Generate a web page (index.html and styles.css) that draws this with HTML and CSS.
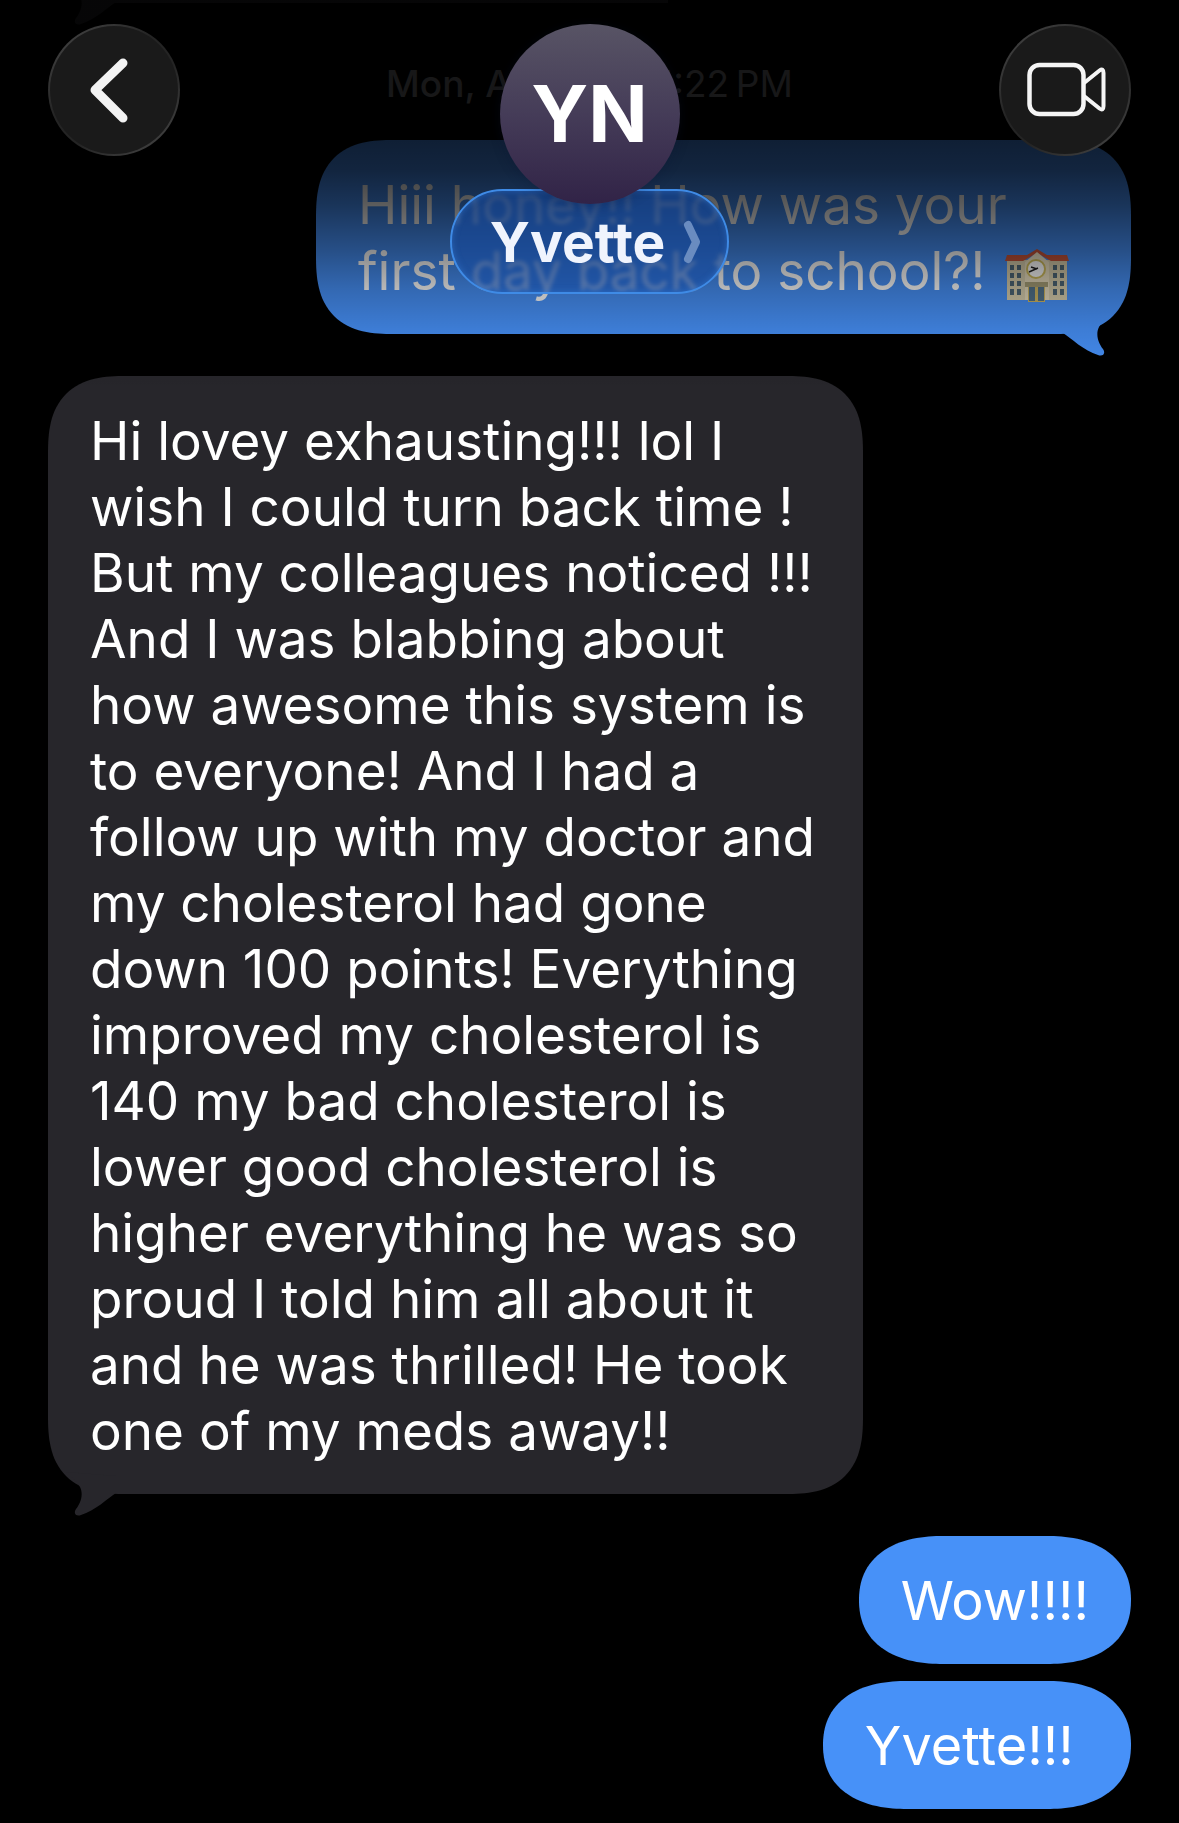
FILE: index.html
```html
<!DOCTYPE html>
<html lang="en">
<head>
<meta charset="utf-8">
<meta name="viewport" content="width=device-width, initial-scale=1">
<title>Yvette</title>
<link rel="stylesheet" href="styles.css">
</head>
<body>
<header class="topbar">
  <button class="round-button" type="button" aria-label="Back">
    <svg viewBox="0 0 132 132" aria-hidden="true"><path d="M75 39 47 66 75 94" fill="none" stroke="#f3f3f3" stroke-width="9" stroke-linecap="round" stroke-linejoin="round"/></svg>
  </button>
  <div class="contact">
    <div class="avatar">YN</div>
    <button class="name-pill" type="button">
      <span>Yvette</span>
      <svg class="chevron" viewBox="0 0 18 44" aria-hidden="true"><path d="M5 5 13 22 5 39" fill="none" stroke="#6a8cc0" stroke-width="8" stroke-linecap="round" stroke-linejoin="round"/></svg>
    </button>
  </div>
  <button class="round-button" type="button" aria-label="Video call">
    <svg viewBox="0 0 132 132" aria-hidden="true"><g fill="none" stroke="#f5f5f5" stroke-width="4" stroke-linejoin="round"><rect x="30.500" y="41" width="54" height="49" rx="10" stroke-width="4.500"/><path d="M85 59 100.500 46.500Q104.500 43.500 104.500 49V82Q104.500 87.500 100.500 84.500L85 72"/></g></svg>
  </button>
</header>

<main class="thread">
  <div class="bubble received earlier">
    <svg class="tail" viewBox="0 0 58 50" aria-hidden="true"><path d="M56 6C50 12 45 15 42 21C38 29 42 38 46 43C49 47 46 51 41 49C27 45 14 32 6 27V10Z"/></svg>
  </div>
  <p class="timestamp"><b>Mon, Aug 11</b> at 5:22&#8239;PM</p>
  <div class="bubble sent wide">
    Hiii honey!! How was your first day back to school?!
    <svg class="school" viewBox="0 0 64 53" role="img" aria-label="School">
      <path d="M2 11h60v40H2z" fill="#d9cfae"/>
      <path d="M0 12 2 6H22L32 0 42 6H62L64 12H46L32 4 18 12Z" fill="#c8553a"/>
      <path d="M20 13 32 3 44 13V51H20Z" fill="#eadfc0"/>
      <circle cx="31" cy="20" r="9" fill="#fff" stroke="#d1bd5e" stroke-width="2"/>
      <path d="M33 19 24 23M32 20 26 18" stroke="#222" stroke-width="1.500"/>
      <g fill="#4f6878">
        <path d="M5 16h4v5H5zM12 16h4v5h-4zM5 24h4v5H5zM12 24h4v5h-4zM5 32h4v5H5zM12 32h4v5h-4zM5 40h4v6H5zM12 40h4v6h-4z"/>
        <path d="M48 16h4v5h-4zM55 16h4v5h-4zM48 24h4v5h-4zM55 24h4v5h-4zM48 32h4v5h-4zM55 32h4v5h-4zM48 40h4v6h-4zM55 40h4v6h-4z"/>
      </g>
      <path d="M20 33h23v5H20z" fill="#a8a078"/>
      <path d="M23 38h17v15H23z" fill="#d1b862"/>
      <path d="M24 38h6v14h-6zM33 38h6v14h-6z" fill="#53748c"/>
    </svg>
    <svg class="tail" viewBox="0 0 58 50" aria-hidden="true"><path d="M56 6C50 12 45 15 42 21C38 29 42 38 46 43C49 47 46 51 41 49C27 45 14 32 6 27V10Z"/></svg>
  </div>
  <div class="bubble received wide">
    Hi lovey exhausting!!! lol I wish I could turn back time !<br>
    But my colleagues noticed !!! And I was blabbing about<br>
    how awesome this system is to everyone! And I had a<br>
    follow up with my doctor and my cholesterol had gone down 100 points! Everything improved my cholesterol is<br>
    140 my bad cholesterol is lower good cholesterol is<br>
    higher everything he was so proud I told him all about it and he was thrilled! He took one of my meds away!!
    <svg class="tail" viewBox="0 0 58 50" aria-hidden="true"><path d="M56 6C50 12 45 15 42 21C38 29 42 38 46 43C49 47 46 51 41 49C27 45 14 32 6 27V10Z"/></svg>
  </div>
  <div class="bubble sent pill">Wow!!!!</div>
  <div class="bubble sent pill follow">Yvette!!!&nbsp;</div>
</main>
</body>
</html>
```

FILE: styles.css
```css
* {
  box-sizing: border-box;
}

body {
  margin: 0;
  background: #000;
  color: #fff;
  font-family: Inter, "Liberation Sans", sans-serif;
  font-size: 53px;
  line-height: 66px;
}

button {
  margin: 0;
  padding: 0;
  color: inherit;
  font: inherit;
  cursor: pointer;
}

.topbar {
  position: absolute;
  inset: 0 0 auto 0;
  z-index: 1;
  display: flex;
  justify-content: space-between;
  align-items: flex-start;
  height: 400px;
  padding: 24px 48px;
  background: linear-gradient(
    rgba(0, 0, 0, 0.84) 0,
    rgba(0, 0, 0, 0.84) 90px,
    rgba(0, 0, 0, 0.79) 140px,
    rgba(0, 0, 0, 0.75) 170px,
    rgba(0, 0, 0, 0.64) 205px,
    rgba(0, 0, 0, 0.46) 250px,
    rgba(0, 0, 0, 0.28) 290px,
    rgba(0, 0, 0, 0.14) 330px,
    rgba(0, 0, 0, 0) 390px
  );
}

.round-button {
  width: 132px;
  height: 132px;
  border: 2px solid transparent;
  border-radius: 50%;
  background:
    linear-gradient(#1a1a1a, #1a1a1a) padding-box,
    linear-gradient(140deg, #4a4a4a, #242424 40%, #242424 60%, #4a4a4a) border-box;
}

.round-button svg {
  display: block;
  width: 132px;
  height: 132px;
  margin: -2px;
}

.contact {
  display: flex;
  flex-direction: column;
  align-items: center;
}

.avatar {
  z-index: 1;
  width: 180px;
  height: 180px;
  border-radius: 50%;
  background: linear-gradient(#585465, #453c58 50%, #312347);
  box-shadow: 0 2px 12px rgba(10, 20, 50, 0.3);
  font-size: 78px;
  font-weight: 700;
  line-height: 180px;
  text-align: center;
}

.name-pill {
  display: flex;
  align-items: center;
  gap: 18px;
  height: 105px;
  margin-top: -15px;
  padding: 0 26px 0 38px;
  border: 2px solid #3f8be6;
  border-radius: 53px;
  background: rgba(22, 74, 158, 0.6);
  box-shadow: inset 0 0 6px rgba(58, 128, 218, 0.5);
  backdrop-filter: blur(2px);
  color: #f0f4fd;
  font-size: 55px;
  font-weight: 700;
}

.chevron {
  width: 18px;
  height: 44px;
}

.thread {
  display: flex;
  flex-direction: column;
  align-items: flex-start;
  padding: 0 48px 14px;
}

.bubble {
  position: relative;
  margin-top: 42px;
  padding: 32px 42px 30px;
  border-radius: 60px;
}

.pill {
  border-radius: 64px;
  font-size: 54px;
}

.wide {
  width: 815px;
  max-width: 100%;
}

@supports (corner-shape: superellipse(1.4)) {
  .wide {
    border-radius: 78px;
    corner-shape: superellipse(1.4);
  }

  .pill {
    border-radius: 84px / 64px;
    corner-shape: superellipse(1.2);
  }
}

.received {
  background: #27262b;
  fill: #27262b;
}

.sent {
  align-self: flex-end;
  background: #4791f8;
  fill: #4791f8;
}

.bubble.follow {
  margin-top: 17px;
}

.earlier {
  width: 620px;
  height: 3px;
  margin-top: 0;
  padding: 0;
  border-radius: 0;
  background: linear-gradient(#27262b, #27262b) 60px 0 no-repeat;
}

.tail {
  position: absolute;
  right: 16px;
  bottom: -22px;
  width: 58px;
  height: 50px;
}

.received .tail {
  right: auto;
  left: 16px;
  transform: scaleX(-1);
}

.timestamp {
  align-self: stretch;
  margin: 0;
  padding: 57px 0 32px;
  color: #8e8e93;
  font-size: 37px;
  line-height: 48px;
  text-align: center;
}

.timestamp b {
  font-weight: 500;
}

.timestamp + .bubble {
  margin-top: 0;
}

.school {
  width: 64px;
  height: 53px;
  margin-left: 4px;
  vertical-align: -12px;
}
```
